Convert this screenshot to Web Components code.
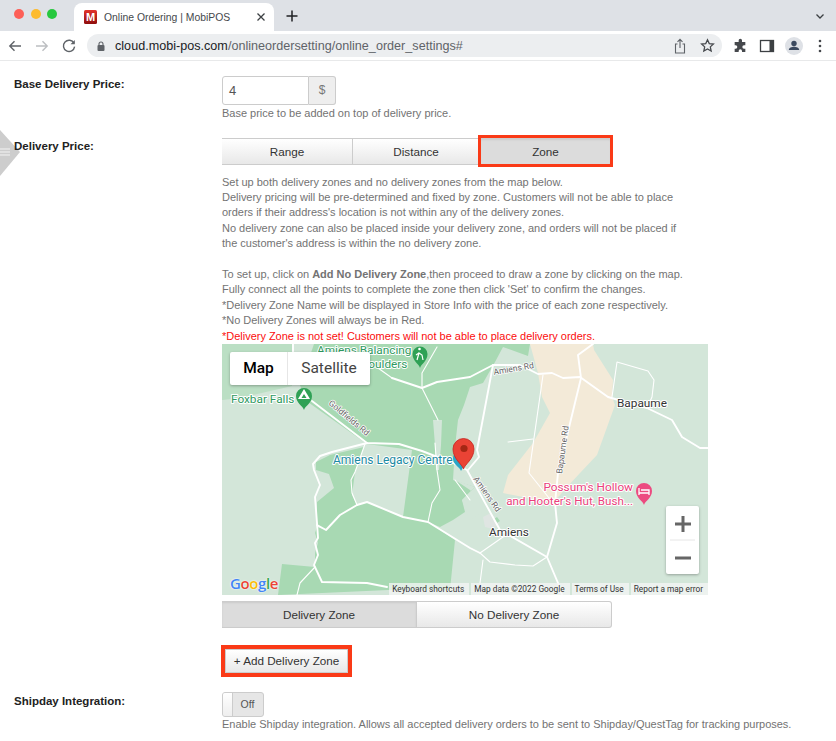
<!DOCTYPE html>
<html lang="en"><head><meta charset="utf-8"><title>Online Ordering | MobiPOS</title>
<style>
html,body{margin:0;padding:0;height:741px;overflow:hidden;background:#fff;font-family:"Liberation Sans",Arial,sans-serif}
</style></head><body>
<browser-chrome></browser-chrome>
<settings-page>
  <settings-row label="Base Delivery Price:" style="--label-top:0px">
    <input-addon value="4" unit="$"></input-addon>
    <help-text style="margin-top:.6px">Base price to be added on top of delivery price.</help-text>
  </settings-row>
  <settings-row label="Delivery Price:" style="margin-top:17px;--label-top:0px">
    <seg-group widths="131,127,132" items="Range|Distance|Zone" active="2" marked="2"></seg-group>
    <help-text style="margin-top:9.5px">Set up both delivery zones and no delivery zones from the map below.<br>Delivery pricing will be pre-determined and fixed by zone. Customers will not be able to place<br>orders if their address's location is not within any of the delivery zones.<br>No delivery zone can also be placed inside your delivery zone, and orders will not be placed if<br>the customer's address is within the no delivery zone.<br><br>To set up, click on <b>Add No Delivery Zone</b>,then proceed to draw a zone by clicking on the map.<br>Fully connect all the points to complete the zone then click 'Set' to confirm the changes.<br>*Delivery Zone Name will be displayed in Store Info with the price of each zone respectively.<br>*No Delivery Zones will always be in Red.<br><span style="color:#fb0d0d">*Delivery Zone is not set! Customers will not be able to place delivery orders.</span></help-text>
    <map-view></map-view>
    <seg-group style="margin-top:6px" widths="195,195" items="Delivery Zone|No Delivery Zone" active="0"></seg-group>
    <add-button style="margin-top:21px">+ Add Delivery Zone</add-button>
  </settings-row>
  <settings-row label="Shipday Integration:" style="margin-top:19px;--label-top:1px">
    <off-toggle></off-toggle>
    <help-text>Enable Shipday integration. Allows all accepted delivery orders to be sent to Shipday/QuestTag for tracking purposes.</help-text>
  </settings-row>
  <side-handle></side-handle>
</settings-page>
<script>
const def=(name,html)=>customElements.define(name,class extends HTMLElement{
  connectedCallback(){ if(this.shadowRoot) return; const r=this.attachShadow({mode:'open'}); r.innerHTML=typeof html==='function'?html(this):html; }
});
def('browser-chrome',`<style>
:host{display:block;height:61px;font-family:"Liberation Sans",Arial,sans-serif}
.strip{height:31px;background:#dee1e6;display:flex;position:relative;box-sizing:border-box}
.lights{display:flex;gap:6.5px;padding:9px 0 0 14px;width:74px;box-sizing:border-box}
.lights i{width:10px;height:10px;border-radius:50%;display:block}
.tab{margin-top:3px;width:200px;height:28px;background:#fff;border-radius:8px 8px 0 0;display:flex;align-items:center;box-sizing:border-box;padding:0 8px 0 10px;font-size:10.4px;color:#45484c;gap:7px}
.tab span{flex:1;white-space:nowrap}
.plus{margin:8px 0 0 10px;width:16px;height:16px}
.chev{margin:10px 10px 0 auto;width:12px;height:12px}
.bar{height:29px;background:#fff;display:flex;align-items:center;border-bottom:1px solid #e8e9ea;box-sizing:content-box}
.nav{display:flex;gap:11px;padding-left:7px;width:87px;box-sizing:border-box}
.nav svg,.end svg{width:16px;height:16px;display:block}
.omni{width:635px;height:23px;border-radius:12px;background:#eceef0;display:flex;align-items:center;box-sizing:border-box;padding:0 7px 0 10px;font-size:12.6px;color:#5f6368;gap:10px;letter-spacing:.01px}
.omni b{font-weight:400;color:#202124}
.omni .u{flex:1;white-space:nowrap}
.omni svg{display:block}
.end{display:flex;align-items:center;gap:11px;padding-left:10px}
</style>
<div class="strip">
 <div class="lights"><i style="background:#fd5f57"></i><i style="background:#fdbb2e"></i><i style="background:#27c83f"></i></div>
 <div class="tab">
  <svg width="13" height="14" viewBox="0 0 13 14"><defs><linearGradient id="g" x1="0" y1="0" x2="0" y2="1"><stop offset="0" stop-color="#e3342c"/><stop offset="1" stop-color="#8e0d0d"/></linearGradient></defs><rect width="13" height="14" rx="1.5" fill="url(#g)"/><text x="6.5" y="11" font-size="11" font-weight="700" text-anchor="middle" fill="#fff" font-family="Liberation Sans">M</text></svg>
  <span>Online Ordering | MobiPOS</span>
  <svg width="10" height="10" viewBox="0 0 10 10"><path d="M1.5 1.5l7 7M8.500 1.500l-7 7" stroke="#3c4043" stroke-width="1.300" fill="none"/></svg>
 </div>
 <svg class="plus" viewBox="0 0 16 16"><path d="M8 2.500v11M2.500 8h11" stroke="#202124" stroke-width="1.500"/></svg>
 <svg class="chev" viewBox="0 0 12 12"><path d="M2.500 4.500L6 8l3.500-3.500" stroke="#3c4043" stroke-width="1.300" fill="none"/></svg>
</div>
<div class="bar">
 <div class="nav">
  <svg viewBox="0 0 16 16"><path d="M14 8H3M7.500 3.200L2.800 8l4.700 4.800" stroke="#5f6368" stroke-width="1.400" fill="none"/></svg>
  <svg viewBox="0 0 16 16"><path d="M2 8h11M8.500 3.200L13.200 8l-4.700 4.800" stroke="#bcbec1" stroke-width="1.400" fill="none"/></svg>
  <svg viewBox="0 0 16 16"><path d="M13 5.200A5.600 5.600 0 1 0 13.600 8.600" stroke="#5f6368" stroke-width="1.400" fill="none"/><path d="M13.800 1.900v4.300H9.500z" fill="#5f6368"/></svg>
 </div>
 <div class="omni">
  <svg width="8" height="10" viewBox="0 0 8 10"><path d="M2 4V3a2 2 0 0 1 4 0v1" stroke="#5f6368" stroke-width="1.100" fill="none"/><rect x=".5" y="4" width="7" height="6" rx="1" fill="#5f6368"/></svg>
  <span class="u"><b>cloud.mobi-pos.com</b>/onlineordersetting/online_order_settings#</span>
  <svg width="14" height="16" viewBox="0 0 14 16" style="margin-right:3px"><path d="M4.500 6H2.500v9h9V6h-2M7 10V1.500M4.500 3.800L7 1.300l2.500 2.500" stroke="#5f6368" stroke-width="1.100" fill="none"/></svg>
  <svg width="15" height="15" viewBox="0 0 24 24"><path d="M12 2.800l2.800 6.200 6.700.7-5 4.500 1.400 6.600L12 17.400l-5.900 3.400 1.400-6.600-5-4.500 6.700-.7z" stroke="#45484c" stroke-width="2" fill="none"/></svg>
 </div>
 <div class="end">
  <svg viewBox="0 0 24 24"><path d="M9 3.500a2.500 2.500 0 0 1 5 0V6h5v5h-2a2.500 2.500 0 0 0 0 5h2v5h-5v-1.500a2.500 2.500 0 0 0-5 0V21H3v-5h1.500a2.500 2.500 0 0 0 0-5H3V6h6z" fill="#45484c" transform="translate(1 0)"/></svg>
  <svg viewBox="0 0 16 16"><rect x="1.500" y="2.500" width="13" height="11" fill="none" stroke="#3c4043" stroke-width="1.300"/><rect x="10.500" y="2.500" width="4" height="11" fill="#3c4043"/></svg>
  <svg style="width:18px;height:18px;margin-left:-1px" viewBox="0 0 18 18"><circle cx="9" cy="9" r="9" fill="#dee1e6"/><circle cx="9" cy="6.500" r="2.700" fill="#3c4a60"/><path d="M3.800 13c0-2.400 2.800-3.300 5.200-3.300s5.200.9 5.200 3.300z" fill="#3c4a60"/></svg>
  <svg viewBox="0 0 16 16" style="margin-left:-2px"><circle cx="8" cy="3" r="1.300" fill="#45484c"/><circle cx="8" cy="8" r="1.300" fill="#45484c"/><circle cx="8" cy="13" r="1.300" fill="#45484c"/></svg>
 </div>
</div>`);
def('settings-page',`<style>:host{display:block;position:relative;isolation:isolate;padding-top:15px;height:665px;overflow:hidden;color:#333}</style><slot></slot>`);
def('settings-row',h=>`<style>
:host{display:grid;grid-template-columns:222px 1fr;align-items:start}
.l{padding:var(--label-top,0) 0 0 14px;font:700 11.5px/16px "Liberation Sans",Arial,sans-serif;color:#222}
.c{display:flex;flex-direction:column;align-items:flex-start;min-width:0}
</style><div class="l">${h.getAttribute('label')}</div><div class="c"><slot></slot></div>`);
def('help-text',`<style>:host{display:block;font:11px/15.4px "Liberation Sans",Arial,sans-serif;color:#737373;white-space:nowrap;letter-spacing:-.015px}</style><slot></slot>`);
def('input-addon',h=>`<style>
:host{display:flex;height:29px;font:13px "Liberation Sans",Arial,sans-serif}
.i{width:87px;box-sizing:border-box;border:1px solid #ccc;border-radius:3px 0 0 3px;background:#fff;padding-left:6px;line-height:27px;color:#555}
.a{width:27px;box-sizing:border-box;border:1px solid #ccc;border-left:0;border-radius:0 3px 3px 0;background:#eee;text-align:center;line-height:27px;color:#777;font-size:12px}
</style><div class="i">${h.getAttribute('value')}</div><div class="a">${h.getAttribute('unit')}</div>`);
def('seg-group',h=>{const it=h.getAttribute('items').split('|'),w=h.getAttribute('widths').split(','),a=+h.getAttribute('active'),m=h.getAttribute('marked');
return `<style>
:host{display:flex;height:27px;font:11.7px "Liberation Sans",Arial,sans-serif;color:#333}
.b{box-sizing:border-box;height:27px;line-height:26px;text-align:center;border:1px solid #ccc;border-left-width:0;background:linear-gradient(#fff,#e8e8e8);position:relative}
.b:first-child{border-left-width:1px;border-radius:3px 0 0 3px}
.b:last-child{border-radius:0 3px 3px 0}
.on{background:#dcdcdc;box-shadow:inset 0 1px 2px rgba(0,0,0,.08)}
.m::after{content:"";position:absolute;left:-2px;right:-2px;top:-4px;bottom:-3px;border:3.500px solid #fa3a17;pointer-events:none}
</style>${it.map((t,i)=>`<div class="b${i==a?' on':''}${i==m?' m':''}" style="width:${w[i]}px">${t}</div>`).join('')}`});
def('add-button',`<style>
:host{display:block;margin-left:3px;width:123px;height:24px;box-sizing:border-box;border:1px solid #ccc;background:linear-gradient(#fff,#e8e8e8);font:11.700px/22px "Liberation Sans",Arial,sans-serif;color:#333;text-align:center;white-space:nowrap;outline:4px solid #fa3a17;outline-offset:0}
</style><slot></slot>`);
def('off-toggle',`<style>
:host{display:flex;width:42px;height:25px;box-sizing:border-box;border:1px solid #ccc;border-radius:3px;background:#e6e6e6;font:10.500px/23px "Liberation Sans",Arial,sans-serif;color:#555;overflow:hidden}
i{display:block;width:9px;background:linear-gradient(#fff,#eee);border-right:1px solid #ccc}
span{flex:1;text-align:center;padding-right:1px}
</style><i></i><span>Off</span>`);
def('side-handle',`<style>:host{position:absolute;left:0;top:69px;width:20px;height:46px;display:block;z-index:-1}svg{display:block}</style>
<svg width="20" height="46" viewBox="0 0 20 46"><path d="M0 0L20 22 0 46z" fill="#cdcdcd"/><path d="M0 19h10M0 22h10M0 25h10" stroke="#f4f4f4" stroke-width="1"/></svg>`);
def('map-view',`<style>
:host{display:block;position:relative;width:486px;height:251px;overflow:hidden;font-family:Roboto,Arial,sans-serif;background:#d3e6d9}
svg{display:block;position:absolute;left:0;top:0}
.roads path{fill:none;stroke:#fff;stroke-linejoin:round;stroke-linecap:round}
text{font-family:Roboto,Arial,sans-serif;paint-order:stroke;stroke:#fff;stroke-width:2px;stroke-linejoin:round}
.type{position:absolute;left:8px;top:8px;height:33px;display:flex;background:#fff;border-radius:2px;box-shadow:0 1px 3px rgba(0,0,0,.3);font-size:15.500px;line-height:33px}
.type div{text-align:center}
.type .m{width:58px;color:#000;font-weight:500;border-right:1px solid #e6e6e6;box-sizing:border-box}
.type .s{width:82px;color:#444}
.zoom{position:absolute;left:444px;top:162px;width:33px;height:68px;background:#fff;border-radius:2px;box-shadow:0 1px 3px rgba(0,0,0,.3)}
.zoom svg{position:static}
.attr{position:absolute;right:0;bottom:0;height:12px;display:flex;gap:2px;font-size:8.300px;line-height:12px;color:#333;white-space:nowrap}
.attr span{background:rgba(245,245,245,.75);padding:0 5px 0 3px;box-sizing:border-box}
.goog{position:absolute;left:8px;bottom:3px;font:600 15px/18px "Open Sans",Arial,sans-serif;letter-spacing:-.4px;text-shadow:0 0 1px #fff,0 0 2px #fff}
</style>
<svg width="486" height="251" viewBox="222 344 486 251">
 <g fill="#a8d9b3">
  <path d="M314 344H530L528 356 503 347 495 362 483 383 470 387 464 405 458 420 455 447 453 480 475 487 462 500 465 512 453 520 440 527 428 522 403 517 412 450 367 444 305 400 300 385z"/>
  <path d="M317 527L326 530 340 515 357 505 367 502 403 517 428 522 455 540 450 590 388 590 278 595 282 564 315 567 315 553 318 543 315 533z"/>
  <path d="M316 462L330 455 364 447 355 472 352 495 357 505 340 515 326 530 317 525 317 502 334 488 329 474 316 470z"/>
  <path d="M222 344H292V386L240 398 222 400z" opacity=".55"/>
 </g>
 <path d="M433 420L442 420 441 445 439 470 436 470 435 445z" fill="#d3e6d9"/>
 <path d="M455 480L475 487 462 500 470 520 485 510 470 490z" fill="#d3e6d9"/>
 <path d="M530 344H593L594 350 613 380 612 397 615 405 597 455 580 473 567 487 553 503 503 493 508 475 533 443 550 413 542 397 538 373z" fill="#f3ead8"/>
 <path d="M483 517l8-4 8 10-6 6-8-2z" fill="#dfe5e2"/>
 <path d="M494 519l3-2 3 4-3 2z" fill="#a8d9b3"/>
 <g class="roads">
  <g stroke-width="1.900">
  <path d="M312 401L367 443 399 444 422 451 453 463 467 470 500 530 547 557 558 583 562 595"/>
  <path d="M392 378L422 388 437 382 470 377 493 365 520 365 538 374 552 373 563 378 580 377 608 397 647 408 672 420 682 437 700 448 708 448"/>
  <path d="M493 365L477 450 479 457 468 470"/>
  <path d="M581 378L578 355 593 344"/>
  <path d="M581 378L558 473 555 503 557 523 547 557"/>
  <path d="M367 443L332 452 320 456 313 464 314 470 320 485 315 497 317 523 318 538 315 543 318 555 314 565 322 582 367 583 387 587"/>
  <path d="M357 505L367 502 403 517 428 522 470 548 480 553"/>
  <path d="M357 505L340 515 326 530 317 525"/>
  <path d="M293 344V352"/>
  </g>
  <g stroke-width="1.100">
  <path d="M543 375L529 473 553 503"/>
  <path d="M508 442L533 439"/>
  <path d="M612 397L617 362 648 371 654 380 652 397 647 408"/>
  <path d="M422 388L438 420M422 388L422 373 437 347"/>
  <path d="M365 444L355 472 351 480 352 493 357 505"/>
  <path d="M435 443L437 470 440 490 432 503 428 522"/>
  <path d="M455 480L470 500"/>
  <path d="M480 553L503 537 517 533M480 553L490 562 515 565 533 566 547 557M483 560L480 583"/>
  <path d="M315 567L300 583 297 595"/>
  <path d="M392 378L378 368"/>
  </g>
 </g>
 <g font-size="8.500" fill="#666">
  <text transform="translate(328 404) rotate(40)" style="stroke-width:1.500px">Goldfields Rd</text>
  <text transform="translate(494 375) rotate(-10)" style="stroke-width:1.500px">Amiens Rd</text>
  <text transform="translate(473 479) rotate(55)" style="stroke-width:1.500px">Amiens Rd</text>
  <text transform="translate(562 474) rotate(-82)" style="stroke-width:1.500px">Bapaume Rd</text>
 </g>
 <g font-size="11.800">
  <text x="317" y="354" fill="#2f9a5f">Amiens Balancing</text>
  <text x="361" y="368" fill="#2f9a5f">Boulders</text>
  <text x="231" y="403" fill="#2f9a5f">Foxbar Falls</text>
  <text x="333" y="464" font-size="12" fill="#1c8aa3">Amiens Legacy Centre</text>
  <text x="617" y="407" fill="#333">Bapaume</text>
  <text x="489" y="536" fill="#333">Amiens</text>
  <text x="633" y="491" text-anchor="end" fill="#ea3f7c">Possum's Hollow</text>
  <text x="633" y="505" text-anchor="end" font-size="11.600" fill="#ea3f7c">and Hooter's Hut, Bush...</text>
 </g>
 <path d="M304 410c-1-4-8-7-8-14a8 8 0 0 1 16 0c0 7-7 10-8 14z" fill="#2fa155"/>
 <path d="M304 389l6 10h-12z" fill="#fff"/><path d="M304 394l2.500 4h-5z" fill="#2fa155"/>
 <path d="M420 368c-1-4-7.500-7-7.500-14a7.500 7.500 0 0 1 15 0c0 7-6.500 10-7.500 14z" fill="#2fa155"/>
 <circle cx="419.500" cy="349" r="1.300" fill="#fff"/><path d="M417 360l2-7 3 2 1 5M419 353l-3 2" stroke="#fff" stroke-width="1.200" fill="none"/>
 <path d="M644 505c-1-4-8-7-8-14a8 8 0 0 1 16 0c0 7-7 10-8 14z" fill="#ec4a80"/>
 <path d="M639 488v7M639 493h10v2M641 490h8v3" stroke="#fff" stroke-width="1.300" fill="none"/>
 <path d="M461 471c-1-4-8-6-8-13a7 7 0 0 1 5-6h8v10z" fill="#2aa7c6"/>
 <path d="M458 455h6l-1 7h-3z" fill="#fff"/>
 <path d="M463.500 469c-1.500-5-10.500-10-10.500-20a10.500 10.500 0 0 1 21 0c0 10-9 15-10.500 20z" fill="#ea4335" stroke="#c5221f" stroke-width=".8"/>
 <circle cx="464" cy="448.500" r="3.600" fill="#a52714"/>
</svg>
<div class="goog"><span style="color:#4285f4">G</span><span style="color:#ea4335">o</span><span style="color:#fbbc05">o</span><span style="color:#4285f4">g</span><span style="color:#34a853">l</span><span style="color:#ea4335">e</span></div>
<div class="type"><div class="m">Map</div><div class="s">Satellite</div></div>
<div class="zoom"><svg width="33" height="68" viewBox="0 0 33 68"><path d="M17 10v16M9 18h16M9 52h16" stroke="#666" stroke-width="3"/><path d="M4 34h25" stroke="#e6e6e6"/></svg></div>
<div class="attr"><span>Keyboard shortcuts</span><span>Map data ©2022 Google</span><span>Terms of Use</span><span>Report a map error</span></div>`);
</script>
</body></html>
